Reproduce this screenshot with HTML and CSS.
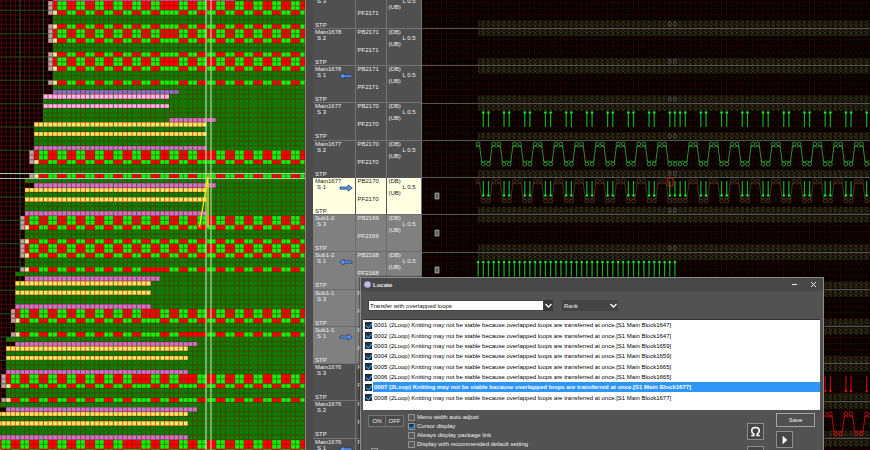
FILE: index.html
```html
<!DOCTYPE html>
<html lang="en">
<head>
<meta charset="utf-8">
<title>Locate</title>
<link rel="stylesheet" href="styles.css">
</head>
<body>
<main class="workspace">
  <section class="fabric"><svg id="fabric" aria-hidden="true"></svg></section>
  <section class="courses"><table><tbody id="courses"></tbody></table></section>
  <section class="loops"><svg id="loops" aria-hidden="true"></svg></section>
</main>

<section class="dialog" role="dialog" aria-labelledby="dialog-title">
  <header class="titlebar">
    <svg class="logo" viewBox="0 0 8 8" aria-hidden="true"><circle cx="4" cy="4" r="3.8" fill="#c9bcec"/><circle cx="4" cy="4" r="2.3" fill="#f4f0ff" stroke="#8f7cc4" stroke-width=".7"/><path d="M4 1v6M1 4h6" stroke="#a493d6" stroke-width=".5"/></svg>
    <h1 id="dialog-title">Locate</h1>
    <button class="window-button" aria-label="Minimize"><svg viewBox="0 0 7 7"><path d="M1 3.5h5"/></svg></button>
    <button class="window-button" aria-label="Close"><svg viewBox="0 0 7 7"><path d="M1 1l5 5M6 1l-5 5"/></svg></button>
  </header>
  <div class="filters">
    <span class="combo combo-light">
      <select aria-label="Message type"><option>Transfer with overlapped loops</option></select>
      <svg viewBox="0 0 9 9" aria-hidden="true"><path d="M1.5 3l3 3 3-3"/></svg>
    </span>
    <span class="combo combo-dark">
      <select aria-label="Rank"><option>Rank</option></select>
      <svg viewBox="0 0 9 9" aria-hidden="true"><path d="M1.5 3l3 3 3-3"/></svg>
    </span>
  </div>
  <ul class="messages" id="messages"></ul>
  <div class="options">
    <div class="switch"><button>ON</button><button>OFF</button></div>
    <div class="checks">
      <label><input type="checkbox">Menu width auto adjust</label>
      <label><input type="checkbox" checked>Cursor display</label>
      <label><input type="checkbox">Always display package link</label>
      <label><input type="checkbox">Display with recommended default setting</label>
    </div>
    <div class="tools">
      <button class="tool" aria-label="Loop view"><svg viewBox="0 0 16 16"><path d="M3.5 12.2h2.7v-1.4C4.500 9.800 4 8.500 4 7.200 4 5 5.700 3.700 8 3.700s4 1.300 4 3.500c0 1.300-.5 2.600-2.200 3.600v1.400h2.700" fill="none" stroke="#fff" stroke-width="1.7"/></svg></button>
      <button class="tool" aria-label="Previous"></button>
    </div>
    <div class="actions">
      <button class="save">Save</button>
      <button class="tool" aria-label="Next"><svg viewBox="0 0 16 16"><path d="M6 4l5 4.500-5 4.500z" fill="#fff"/></svg></button>
    </div>
  </div>
  <label class="report"><input type="checkbox" aria-label="Report"></label>
</section>
<script src="script.js"></script>
</body>
</html>
```
FILE: styles.css
```css
* { box-sizing: border-box; }
body {
  margin: 0;
  height: 100vh;
  overflow: hidden;
  background: #000;
  color: #f0f0f0;
  font: 6px/8px "Liberation Sans", Arial, sans-serif;
}
button, select, input { font: inherit; color: inherit; margin: 0; padding: 0; }
svg { display: block; }

.workspace { display: flex; height: 100%; }
.fabric { flex: 0 0 306px; border-right: 1px solid #8a8a8a; overflow: hidden; }
.fabric svg, .loops svg { width: 100%; height: 100%; }
.loops { flex: 1; min-width: 0; border-left: 1px solid #777; overflow: hidden; }

.courses { flex: 0 0 115px; padding-left: 7px; background: #4b4b4b; overflow: hidden; }
.courses table { width: 100%; margin-top: -9px; border-collapse: collapse; table-layout: fixed; background: #505050; }
.courses td { height: 37px; padding: 0; vertical-align: top; border: solid #747474; border-width: 1px 1px 0 0; }
.courses tr:nth-child(4n) td { height: 38px; }
.courses td:nth-child(1) { width: 42px; }
.courses td:nth-child(2) { width: 31px; }
.courses td:last-child { border-right: 0; }
.courses .sub { background: #808080; }
.courses .sub td { border-color: #6c6c6c; }
.courses .current { background: #ffffe1; color: #222; }
.courses .current td { border-color: #555; }
.cell { display: grid; height: 36px; padding-left: 2px; line-height: 6px; }
.cell-name { grid-template: 6px 6px 1fr 6px / 24px 1fr; }
.cell-name .name { grid-area: 1 / 1 / 2 / 3; }
.cell-name .step { grid-area: 2 / 1; padding-left: 2px; }
.cell-name .stop { grid-area: 4 / 1; }
.cell-name svg { grid-area: 2 / 2; width: 14px; height: 8px; }
.cell-bed { grid-template-rows: 18px 18px; }
.cell-bed span:last-child { grid-row: 2; }
.cell-tension { grid-template: 6px 6px 6px / 14px 1fr; }
.cell-tension .rear { grid-area: 1 / 1; }
.cell-tension .front { grid-area: 3 / 1; }
.cell-tension .value { grid-area: 2 / 2; }

.dialog {
  position: absolute;
  left: 360px;
  right: 46px;
  top: 277px;
  border: 1px solid #8c8c8c;
  border-bottom: 0;
  background: #525252;
  box-shadow: 0 0 2px #000;
}
.titlebar { display: flex; align-items: center; height: 13px; padding: 0 6px 0 3px; background: #474747; }
.titlebar h1 { flex: 1; margin: 0 0 0 2px; font-size: 6px; }
.logo { width: 7px; height: 7px; }
.window-button { width: 7px; height: 7px; margin-left: 12px; border: 0; background: none; }
.window-button svg { fill: none; stroke: #eee; stroke-width: 1; }

.filters { display: flex; gap: 9px; padding: 9px 7px 8px; }
.combo { display: flex; position: relative; height: 11px; }
.combo select { width: 100%; padding: 0 1px; border: 1px solid #444; border-radius: 0; appearance: none; background: #434343; outline: 0; }
.combo svg { position: absolute; right: 0; top: 1px; width: 9px; height: 9px; fill: none; stroke: #fff; stroke-width: 1.3; }
.combo-light { width: 185px; padding-right: 9px; background: #383838; }
.combo-light select { background: #fff; color: #111; }
.combo-dark { width: 56px; }

.messages {
  display: grid;
  grid-auto-rows: 1fr;
  height: 91px;
  margin: 0 3px 0 2px;
  padding: 0 0 7px 2px;
  list-style: none;
  background: #fff;
  color: #000;
  border-top: 1px solid #333;
}
.messages label { display: flex; align-items: center; gap: 1px; height: 100%; }
.messages .text { flex: 1; padding-left: 1px; line-height: 10px; white-space: nowrap; }
.messages .selected .text { background: #2f96f8; color: #fff; font-weight: bold; }

input[type="checkbox"] { appearance: none; flex: none; width: 7px; height: 7px; border: 1px solid #929292; background: #5a5a5a; }
input[type="checkbox"]:checked { background: #253340; }
input[type="checkbox"]:checked::before {
  content: "";
  display: block;
  width: 3px;
  height: 5px;
  margin: -1px 0 0 1px;
  border: solid #36a4ff;
  border-width: 0 1px 1px 0;
  transform: rotate(40deg);
}
.messages input[type="checkbox"] { border-color: #1c2733; }

.options { display: flex; align-items: flex-start; padding: 3px 8px 0 7px; }
.switch { display: flex; margin-top: 2px; }
.switch button { width: 18px; height: 12px; border: 1px solid #757575; background: #4b4b4b; }
.switch button + button { border-left: 0; }
.checks { display: grid; flex: 1; gap: 1px; margin-left: 4px; }
.checks label { display: flex; align-items: center; gap: 2px; }
.tools, .actions { display: flex; flex-direction: column; gap: 4px; }
.tools { margin: 10px 12px 0 0; gap: 6px; }
.tool { width: 17px; height: 17px; border: 1px solid #8d8d8d; background: #464646; }
.save { width: 39px; height: 14px; border: 1px solid #a5a5a5; background: #505050; }
.report { display: flex; margin: -15px 0 0 10px; }
```
FILE: script.js
```js
/* Fabric chart: one unit is one stitch. */
const CELL = 14 / 3;
const COLS = 66;
const out = [];
const rect = (x, y, w, h, fill) => out.push(`<rect x="${x}" y="${y}" width="${w}" height="${h}" fill="${fill}"/>`);

[[-1, 20, 11], [20, 26, 9], [26, 38, 7], [38, 39, 5], [39, 40, 7], [40, 58, 5], [58, 59, 3], [59, 60, 5],
 [60, 72, 3], [72, 73, 1], [73, 74, 3], [74, 86, 1], [86, 87, -1], [87, 88, 1], [88, 98, -1]]
  .forEach(([from, to, start]) => rect(start, from, COLS - start, to - from, "#008400"));

const RED = "#ff0000", LIME = "#00ff00";
function checker(row, height, start, shifts, inverse, solid) {
  rect(start - 1, row, 1, height, "#b4a8a8");
  rect(start, row, 1, height, inverse ? "#dcf5a0" : RED);
  for (let c = start + 1, i = 0; c < COLS; c += 2, i++) {
    let green = i % 2 === 0;
    shifts.forEach(s => { if (c >= s) green = !green; });
    if (inverse) green = !green;
    if (solid && c >= solid[0] && c < solid[1]) green = false;
    rect(c, row, 2, height, green ? LIME : RED);
  }
}
[[0, 2, 11, [36], 0], [2, 1, 11, [36], 1], [5, 1, 11, [36], 1], [6, 2, 11, [36], 0], [8, 1, 11, [36], 1], [11, 1, 11, [36], 1],
 [12, 2, 11, [36], 0], [14, 1, 11, [36], 1], [17, 1, 11, [36], 1],
 [32, 2, 7, [44], 0], [34, 1, 7, [44], 1], [37, 1, 7, [44], 1],
 [46, 2, 5, [], 0], [48, 1, 5, [], 1], [51, 1, 5, [], 1], [52, 2, 5, [], 0], [54, 1, 5, [], 1], [57, 1, 5, [], 1, [30, 36]],
 [66, 2, 3, [32], 0], [68, 1, 3, [32], 1], [71, 1, 3, [32], 1, [38, 44]],
 [80, 2, 1, [30, 40], 0], [82, 1, 1, [30, 40], 1], [85, 1, 1, [30, 40], 1],
 [94, 2, -1, [28], 0], [96, 1, -1, [28], 1]].forEach(a => checker(...a));

const PURPLE = "#c678cf", YELLOW = "#ffe95c", PINK = "#ffb5f4";
[[-1, 11, 50, PURPLE], [19, 11, 38, "#7d78c4"], [20, 9, 36, PINK], [22, 9, 36, PINK], [25, 36, 46, PURPLE],
 [26, 7, 44, YELLOW], [28, 7, 44, YELLOW], [31, 7, 44, PURPLE], [39, 7, 46, PURPLE], [40, 5, 44, YELLOW],
 [42, 5, 44, YELLOW], [45, 5, 44, PURPLE], [59, 5, 34, PURPLE], [60, 3, 32, YELLOW], [62, 3, 32, YELLOW],
 [65, 3, 32, PURPLE], [73, 3, 42, PURPLE], [74, 1, 40, YELLOW], [76, 1, 40, YELLOW], [79, 1, 40, PURPLE],
 [87, 1, 42, PURPLE], [88, -1, 40, YELLOW], [90, -1, 40, YELLOW], [93, -1, 40, PURPLE]]
  .forEach(([row, from, to, fill]) => rect(from, row, to - from, 1, fill));

let minor = "", major = "";
for (let i = -1; i < 98; i++) {
  minor += `M-1 ${i}H${COLS}`;
  if (i < COLS) minor += `M${i} -1V98`;
  if (i % 5 === 2) major += `M-1 ${i}H${COLS}`;
  if (i % 5 === 4 && i < COLS) major += `M${i} -1V98`;
}
document.getElementById("fabric").innerHTML =
  `<g transform="translate(1.33 1) scale(${CELL})"><g shape-rendering="crispEdges">${out.join("")}</g>
   <path d="${minor}" stroke="#8a0a0a" stroke-opacity=".58" stroke-width=".22"/>
   <path d="${major}" stroke="#109030" stroke-opacity=".5" stroke-width=".22"/></g>
   <path d="M206 0V450M211 0V450" stroke="#d8f5d0" stroke-opacity=".65" stroke-width="1.5"/>
   <path d="M0 173.500H306M0 178.500H306" stroke="#d8e5d8" stroke-opacity=".8"/>
   <path d="M199.500 227L208 176V227" fill="none" stroke="#f2f200" stroke-width="1.300"/>
   <path d="M198 225h3v3h-3zM206.500 174.500h3v2h-3z" fill="none" stroke="#f07020" stroke-width=".7"/>`;

/* Course table. */
const left = '<svg viewBox="0 0 14 8"><path d="M.7 4l4.300-3v2h8v2.200H5v2z" fill="#5f9bff" stroke="#20305a" stroke-width=".7"/></svg>';
const right = '<svg viewBox="0 0 14 8"><path d="M13.300 4L9 1v2H1v2.200h8v2z" fill="#5f9bff" stroke="#20305a" stroke-width=".7"/></svg>';
const courses = [
  ["", 3, 2171], ["Main1678", 2, 2171], ["Main1678", 1, 2171, left],
  ["Main1677", 3, 2170], ["Main1677", 2, 2170], ["Main1677", 1, 2170, right, "current"],
  ["Sub1-2", 3, 2169, "", "sub"], ["Sub1-2", 1, 2168, left, "sub"],
  ["Sub1-1", 3, 2167, "", "sub"], ["Sub1-1", 1, 2166, right, "sub"],
  ["Main1676", 3, 2165], ["Main1676", 2, 2165], ["Main1676", 1, 2165, left]
];
document.getElementById("courses").innerHTML = courses.map(([name, step, bed, arrow = "", cls = ""]) =>
  `<tr class="${cls}"><td><div class="cell cell-name"><span class="name">${name}</span><span class="step">S ${step}</span>${arrow}<span class="stop">STP</span></div></td>
   <td><div class="cell cell-bed">${name && `<span>PB${bed}</span>`}<span>PF${bed}</span></div></td>
   <td><div class="cell cell-tension">${name && '<span class="rear">(DB)</span>'}<span class="value">L 0.5</span><span class="front">(UB)</span></div></td></tr>`).join("");

/* Loop chart: needle positions across, one course every 37 pixels. */
const PITCH = 5.18, X0 = 61.3, LAST = 400;
const nx = n => X0 + n * PITCH;
const low = n => n >= 36 ? (n < 40 || (n >= 42 && (n - 42) % 4 < 2)) : (((n % 4) + 4) % 4) < 2;

function pins(ball, end, color, test) {
  let d = "", dots = "";
  for (let n = -1; n < LAST; n++) if (test(n)) {
    d += `M${nx(n)} ${ball}V${end}`;
    dots += `<circle cx="${nx(n)}" cy="${ball}" r="1.300"/>`;
  }
  return `<path d="${d}" stroke="${color}" stroke-opacity=".75" stroke-width="1.200"/><g fill="${color}">${dots}</g>`;
}
function wave(top, bottom, color, flip, from = -1) {
  let d = "";
  for (let n = from; n < LAST; n++) {
    const down = low(n) !== flip, next = low(n + 1) !== flip, x = nx(n), y = down ? bottom : top, s = down ? -1 : 1;
    d += `M${x - 1.9} ${y}a1.900 1.900 0 1 0 3.800 0a1.900 1.900 0 1 0 -3.800 0M${x - 2.4} ${y + s * 3.2}L${x} ${y + s * 1.8}L${x + 2.4} ${y + s * 3.2}`;
    if (down !== next) d += `M${x + 1.5} ${y + s * 2}L${nx(n + 1) - 1.5} ${(next ? bottom : top) - s * 2}`;
  }
  return `<path d="${d}" fill="none" stroke="${color}" stroke-width=".9"/>`;
}
const lines = [28, 65.5, 103, 140, 177.5, 214.5, 252, 289, 326.5, 363.5, 401, 438.5];
let beds = "";
lines.forEach((y, i) => {
  beds += `<rect x="56" y="${y - 7.5}" width="100%" height="7" fill="url(#bed)"/>`;
  if (i !== 3 && i !== 4) beds += `<rect x="56" y="${y + 1}" width="100%" height="7" fill="url(#bed)"/>`;
  if (i < 7) [36, 37].forEach(n => { beds += `<ellipse cx="${nx(n)}" cy="${y - 4}" rx="1.500" ry="2.400" fill="none" stroke="#555b6b" stroke-width=".7"/>`; });
});
const markers = [196, 233, 270].map(y =>
  `<rect x="13" y="${y - 3}" width="4" height="6" fill="#777" stroke="#aaa" stroke-width=".7"/><path d="M14 ${y - 1}h2M14 ${y + 1}h2" stroke="#222" stroke-width=".6"/>`).join("");

document.getElementById("loops").innerHTML =
  `<defs>
    <pattern id="grid" x="3.600" y="2" width="${PITCH}" height="6.200" patternUnits="userSpaceOnUse"><path d="M0 .5H6M.5 0V7" stroke="#2b0000" stroke-width=".8"/><path d="M2.500 3h1" stroke="#06260f"/></pattern>
    <pattern id="bed" x="${X0 - PITCH / 2}" y="${28 - 7.5}" width="${PITCH}" height="3.500" patternUnits="userSpaceOnUse"><rect width="6" height="4" fill="#0c0803"/><path d="M.6 0L4.600 3.500M4.600 0L.6 3.500" stroke="#3a421e" stroke-width=".8"/><path d="M0 .4h2" stroke="#582518" stroke-width=".7"/></pattern>
  </defs>
  <rect width="100%" height="100%" fill="#030000"/><rect width="100%" height="100%" fill="url(#grid)"/>
  ${beds}
  <path d="${lines.map(y => `M0 ${Math.floor(y) + 0.5}H3000`).join("")}" stroke="#6a6a6a" stroke-opacity=".8"/>
  ${pins(112.5, 127, "#14e82c", low)}
  ${wave(144, 164, "#2f9f3c", false)}
  ${wave(181, 201, "#493422", false)}
  ${pins(195.5, 181, "#14e82c", low)}
  ${pins(262, 277, "#14e82c", n => n < 38)}
  ${pins(391, 376, "#f00014", n => n > 60 && low(n))}
  ${wave(414, 434, "#c01414", true, 60)}
  <rect x="246" y="178" width="5" height="8" fill="none" stroke="#d01818"/>
  ${markers}`;

/* Message list. */
document.getElementById("messages").innerHTML = [1647, 1647, 1659, 1659, 1665, 1665, 1677, 1677].map((block, i) =>
  `<li class="${i === 6 ? "selected" : ""}"><label><input type="checkbox" checked><span class="text">000${i + 1} (2Loop) Knitting may not be stable because overlapped loops are transferred at once.[S1 Main Block${block}]</span></label></li>`).join("");
```
